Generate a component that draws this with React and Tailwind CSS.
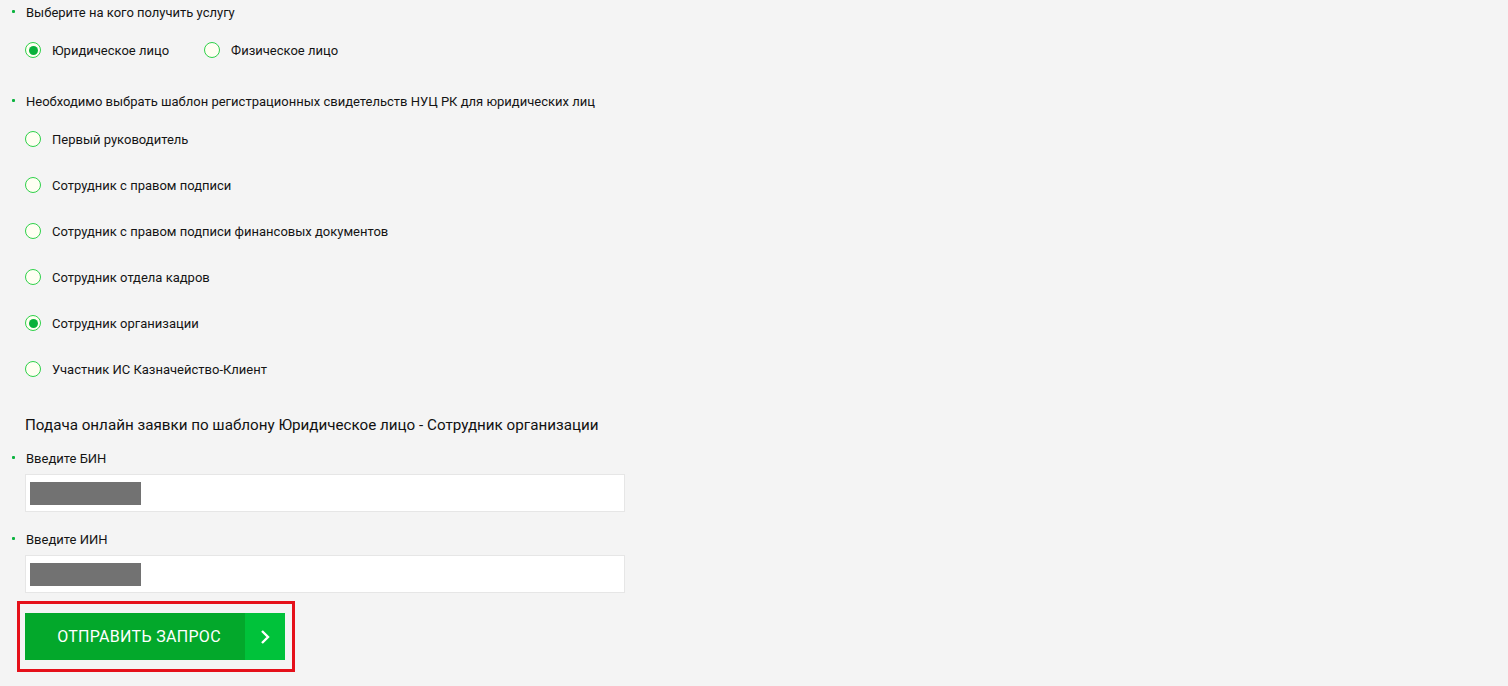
import React, { useState } from "react";

const Radio = ({ checked, label, onClick }) => (
  <label onClick={onClick} className="flex items-center gap-[11px] h-[16px] leading-[16px] cursor-pointer">
    <span className="flex items-center justify-center w-[16px] h-[16px] rounded-full border border-[#2fd14a] bg-[#fffff2]">
      {checked && <span className="w-[9px] h-[9px] rounded-full bg-[#08b13a]" />}
    </span>
    <span className="pt-[1px]">{label}</span>
  </label>
);

const Label = ({ children }) => (
  <div className="flex items-center h-[16px] leading-[16px]">
    <span className="ml-[12px] mb-[4px] w-[3px] h-[3px] bg-[#0bb33f] rounded-[1px]" />
    <span className="pl-[11px]">{children}</span>
  </div>
);

const templates = [
  "Первый руководитель",
  "Сотрудник с правом подписи",
  "Сотрудник с правом подписи финансовых документов",
  "Сотрудник отдела кадров",
  "Сотрудник организации",
  "Участник ИС Казначейство-Клиент",
];

const App = () => {
  const [who, setWho] = useState("legal");
  const [template, setTemplate] = useState(4);

  return (
    <div className="min-h-[686px] bg-[#f4f4f4] text-[13px] text-[#141414] font-['Roboto',sans-serif] pt-[5px]">
      <Label>Выберите на кого получить услугу</Label>
      <div className="flex gap-[35px] pl-[25px] mt-[21px]">
        <Radio label="Юридическое лицо" checked={who === "legal"} onClick={() => setWho("legal")} />
        <Radio label="Физическое лицо" checked={who === "person"} onClick={() => setWho("person")} />
      </div>

      <div className="mt-[36px]">
        <Label>Необходимо выбрать шаблон регистрационных свидетельств НУЦ РК для юридических лиц</Label>
      </div>
      <div className="flex flex-col gap-[30px] pl-[25px] mt-[21px]">
        {templates.map((t, i) => (
          <Radio key={t} label={t} checked={template === i} onClick={() => setTemplate(i)} />
        ))}
      </div>

      <h3 className="pl-[25px] mt-[38px] h-[20px] leading-[20px] text-[15.2px] text-[#111]">
        Подача онлайн заявки по шаблону Юридическое лицо - Сотрудник организации
      </h3>

      <div className="mt-[16px]">
        <Label>Введите БИН</Label>
      </div>
      <div className="ml-[25px] mt-[7px] w-[600px] h-[38px] bg-white border border-[#e6e6e6] flex items-center pl-[4px]">
        <div className="w-[111px] h-[23px] bg-[#727272]" />
      </div>

      <div className="mt-[20px]">
        <Label>Введите ИИН</Label>
      </div>
      <div className="ml-[25px] mt-[7px] w-[600px] h-[38px] bg-white border border-[#e6e6e6] flex items-center pl-[4px]">
        <div className="w-[111px] h-[23px] bg-[#727272]" />
      </div>

      <div className="ml-[17px] mt-[8px] w-[278px] h-[71px] border-[3px] border-[#e5101a] flex items-center pl-[5px]">
        <button className="flex h-[47px] w-[260px] text-white">
          <span className="flex-1 flex items-center justify-center pl-[8px] bg-[#03a82b] text-[16px] tracking-[0.3px]">
            ОТПРАВИТЬ ЗАПРОС
          </span>
          <span className="w-[40px] flex items-center justify-center bg-[#00c23a]">
            <svg width="12" height="16" viewBox="0 0 12 16" fill="none">
              <path d="M3 2l6 6-6 6" stroke="white" strokeWidth="2.4" />
            </svg>
          </span>
        </button>
      </div>
    </div>
  );
};

export default App;
